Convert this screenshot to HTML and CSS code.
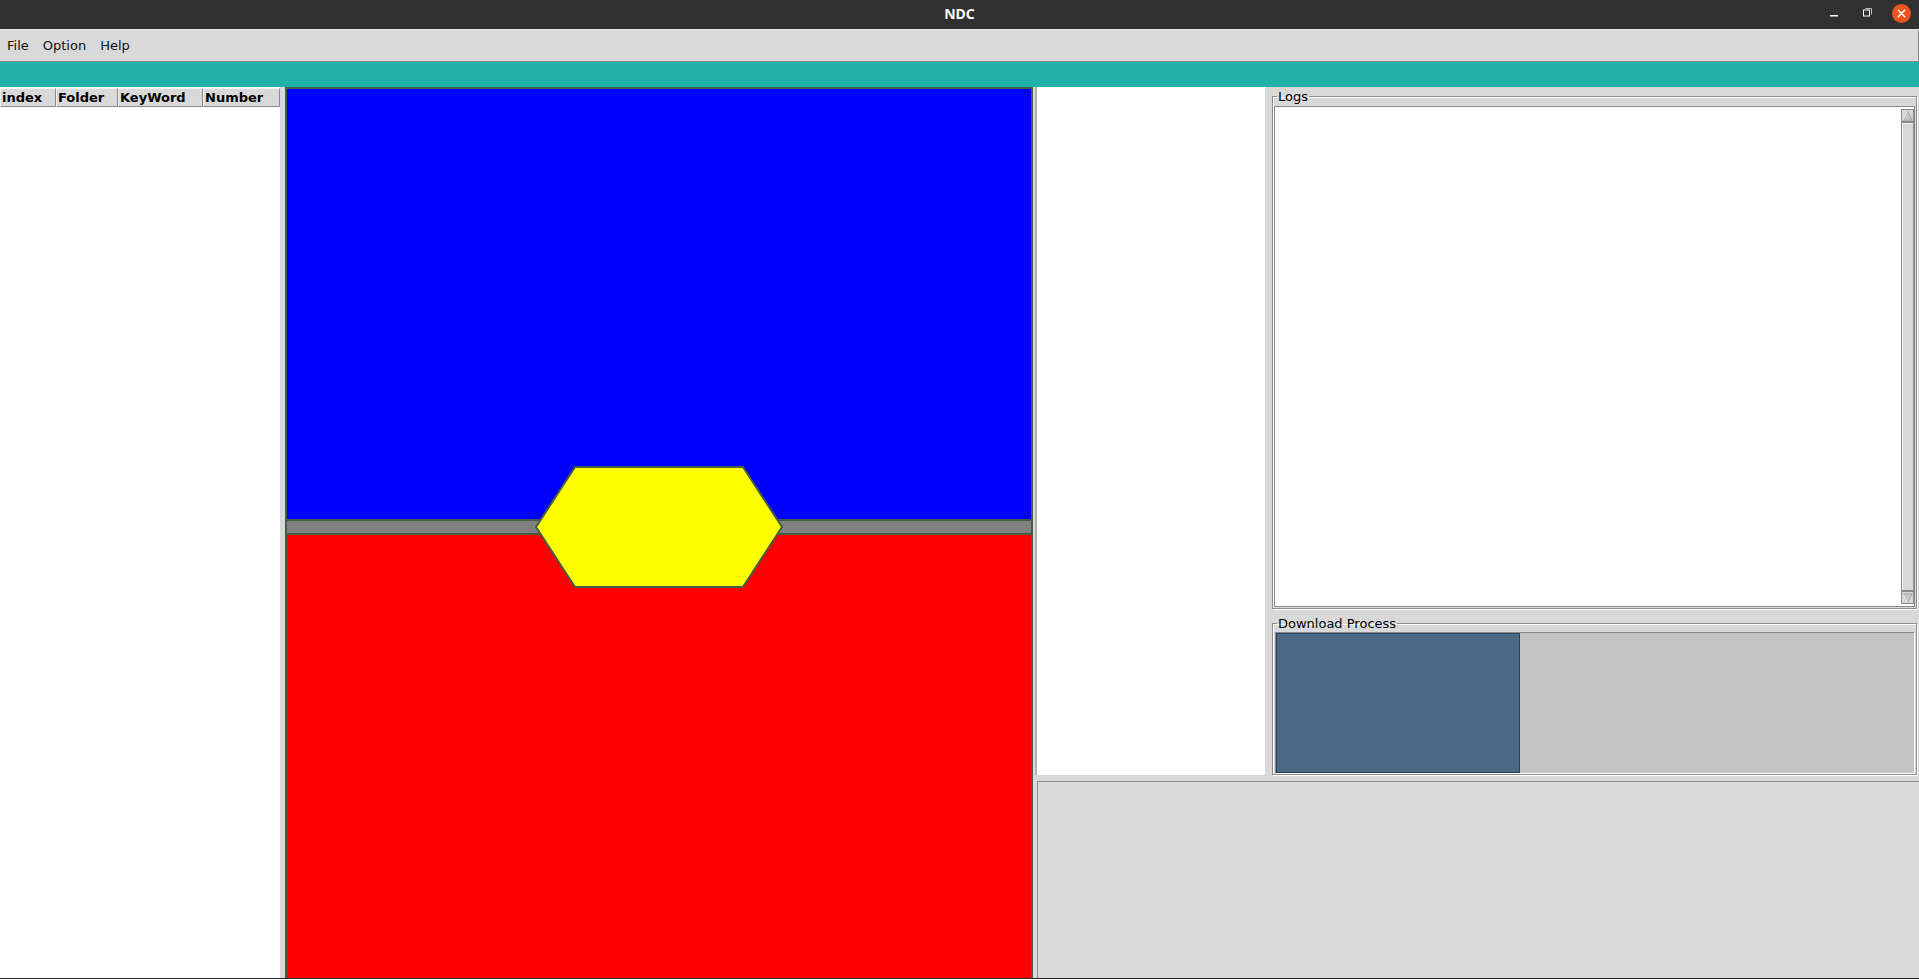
FILE: index.html
```html
<!DOCTYPE html>
<html lang="en">
<head>
<meta charset="utf-8">
<title>NDC</title>
<link rel="stylesheet" href="styles.css">
</head>
<body>
<div class="titlebar">
  <div class="title">NDC</div>
  <div class="winctl">
    <svg class="ic-min" width="8" height="2" viewBox="0 0 8 2"><rect width="8" height="1.5" fill="#ffffff"/></svg>
    <svg class="ic-max" width="10" height="10" viewBox="0 0 10 10">
      <path d="M2.5 1.5 H8.5 V7.5" fill="none" stroke="#bdbdbd" stroke-width="1"/>
      <rect x="0.5" y="3" width="6" height="6" fill="none" stroke="#ffffff" stroke-width="1"/>
    </svg>
    <span class="ic-close">
      <svg width="19" height="19" viewBox="0 0 19 19">
        <circle cx="9.5" cy="9.5" r="9.5" fill="#e95420"/>
        <path d="M6.3 6.3 L12.7 12.7 M12.7 6.3 L6.3 12.7" stroke="#ffffff" stroke-width="1.5" stroke-linecap="round"/>
      </svg>
    </span>
  </div>
</div>
<div class="menubar">
  <span class="menu-item">File</span>
  <span class="menu-item">Option</span>
  <span class="menu-item">Help</span>
</div>
<div class="accent"></div>
<div class="main">
  <div class="left">
    <div class="thead">
      <div class="th">index</div>
      <div class="th">Folder</div>
      <div class="th">KeyWord</div>
      <div class="th">Number</div>
    </div>
  </div>
  <div class="sash"></div>
  <div class="canvas">
    <svg class="canvas-svg" width="744" height="889" viewBox="0 0 744 889">
      <rect x="0" y="0" width="744" height="431" fill="#0000ff"/>
      <rect x="0" y="446" width="744" height="443" fill="#ff0000"/>
      <rect x="-2" y="431" width="748" height="14" fill="#808080" stroke="#435e43" stroke-width="2"/>
      <polygon points="288,378 456,378 495,438 456,498 288,498 249,438" fill="#ffff00" stroke="#435e43" stroke-width="2"/>
    </svg>
  </div>
  <div class="right">
    <div class="top">
      <div class="list-panel"></div>
      <div class="fields">
        <fieldset class="group logs">
          <legend>Logs</legend>
          <div class="textbox">
            <div class="scrollbar">
              <div class="arrow">
                <svg width="11" height="11" viewBox="0 0 11 11"><path d="M5.5 0.8 L10.2 10.2 L0.8 10.2 Z" fill="#c6c6c6" stroke="#9a9a9a" stroke-width="0.8"/><path d="M5.5 0.8 L0.8 10.2" stroke="#ffffff" stroke-width="0.8"/></svg>
              </div>
              <div class="slider"></div>
              <div class="arrow">
                <svg width="11" height="10" viewBox="0 0 11 10"><path d="M0.8 0.8 L10.2 0.8 L5.5 9.4 Z" fill="#c6c6c6" stroke="#9a9a9a" stroke-width="0.8"/><path d="M0.8 0.8 L5.5 9.4" stroke="#ffffff" stroke-width="0.8"/></svg>
              </div>
            </div>
          </div>
        </fieldset>
        <fieldset class="group download">
          <legend>Download Process</legend>
          <div class="trough">
            <div class="bar" style="width:244px"></div>
          </div>
        </fieldset>
      </div>
    </div>
    <div class="bottom-panel"></div>
  </div>
</div>
</body>
</html>
```

FILE: styles.css
```css
* { box-sizing: border-box; }
html, body { margin: 0; padding: 0; }
body {
  width: 1919px;
  height: 979px;
  overflow: hidden;
  background: #d9d9d9;
  font-family: "DejaVu Sans", sans-serif;
  font-size: 13px;
  color: #000;
}

.titlebar {
  height: 30px;
  background: #313030;
  border-bottom: 1px solid #e4e4e4;
  display: grid;
  grid-template-columns: 1fr auto 1fr;
  align-items: center;
}
.title {
  grid-column: 2;
  color: #ffffff;
  font: bold 14px "Noto Sans", sans-serif;
  line-height: 18px;
  padding-bottom: 2px;
}
.winctl {
  grid-column: 3;
  justify-self: end;
  display: flex;
  align-items: center;
  padding-right: 8px;
  padding-bottom: 2px;
}
.ic-min { display: block; margin-right: 25px; margin-top: 5px; }
.ic-max { display: block; margin-right: 19px; margin-top: -3px; }
.ic-close { display: block; width: 19px; height: 19px; }
.ic-close svg { display: block; }

.menubar {
  height: 32px;
  border-bottom: 1px solid #8a8a8a;
  border-right: 1px solid #8a8a8a;
  display: flex;
  align-items: center;
}
.menu-item {
  padding: 0 7px;
  line-height: 16px;
  font-size: 13px;
  color: #111;
}

.accent {
  height: 25px;
  background: #20b2aa;
}

.main {
  display: flex;
  height: 892px;
  border-bottom: 1px solid #262626;
}

.left {
  width: 280px;
  background: #ffffff;
  padding-top: 1px;
  flex: none;
}
.thead {
  display: grid;
  grid-template-columns: 56px 62px 85px 77px;
}
.th {
  height: 19px;
  line-height: 17px;
  background: #d9d9d9;
  border: 1px solid;
  border-color: #f2f2f2 #8a8a8a #8a8a8a #f2f2f2;
  font-weight: bold;
  font-size: 13px;
  padding-left: 1px;
  white-space: nowrap;
  overflow: hidden;
}

.sash { width: 5px; flex: none; }

.canvas {
  width: 748px;
  flex: none;
  border: 2px solid #435e43;
  border-bottom: 0;
  background: #ffffff;
}
.canvas-svg { display: block; }

.right {
  flex: 1;
  display: flex;
  flex-direction: column;
  padding-left: 2px;
}
.top {
  height: 688px;
  display: flex;
  flex: none;
}
.list-panel {
  width: 230px;
  background: #ffffff;
  border-left: 2px solid #b3b3b3;
}
.fields {
  width: 645px;
  margin-left: 7px;
  padding-top: 2px;
  display: flex;
  flex-direction: column;
  gap: 7px;
}

.group {
  margin: 0;
  padding: 2px 1px 1px 1px;
  border: 1px solid #8c8c8c;
  box-shadow: inset 1px 1px 0 #ffffff, 1px 1px 0 #ffffff;
  min-width: 0;
}
.group legend {
  padding: 0 1px;
  margin-left: 3px;
  line-height: 15px;
  font-size: 13px;
  color: #000;
}
.logs { height: 520px; }
.download { height: 159px; padding-top: 1px; }

.textbox {
  height: 501px;
  background: #ffffff;
  border: 1px solid #8a8a8a;
  display: flex;
  justify-content: flex-end;
  padding: 2px 0;
}
.scrollbar {
  width: 13px;
  display: flex;
  flex-direction: column;
}
.arrow {
  height: 13px;
  border: 1px solid #8a8a8a;
  background: #d9d9d9;
  display: flex;
  align-items: center;
  justify-content: center;
}
.arrow svg { display: block; }
.slider {
  flex: 1;
  border: 1px solid #8a8a8a;
  box-shadow: inset 1px 1px 0 #f4f4f4;
  background: #d9d9d9;
}

.trough {
  height: 142px;
  margin-left: 1px;
  background: #c3c3c3;
  border: 1px solid;
  border-color: #8a8a8a #ffffff #ffffff #8a8a8a;
}
.bar {
  height: 100%;
  background: #4a6984;
  border: 1px solid #2d4255;
}

.bottom-panel {
  flex: 1;
  margin-top: 6px;
  margin-left: 2px;
  background: #d9d9d9;
  border-top: 1px solid #8a8a8a;
  border-left: 1px solid #8a8a8a;
}
```
